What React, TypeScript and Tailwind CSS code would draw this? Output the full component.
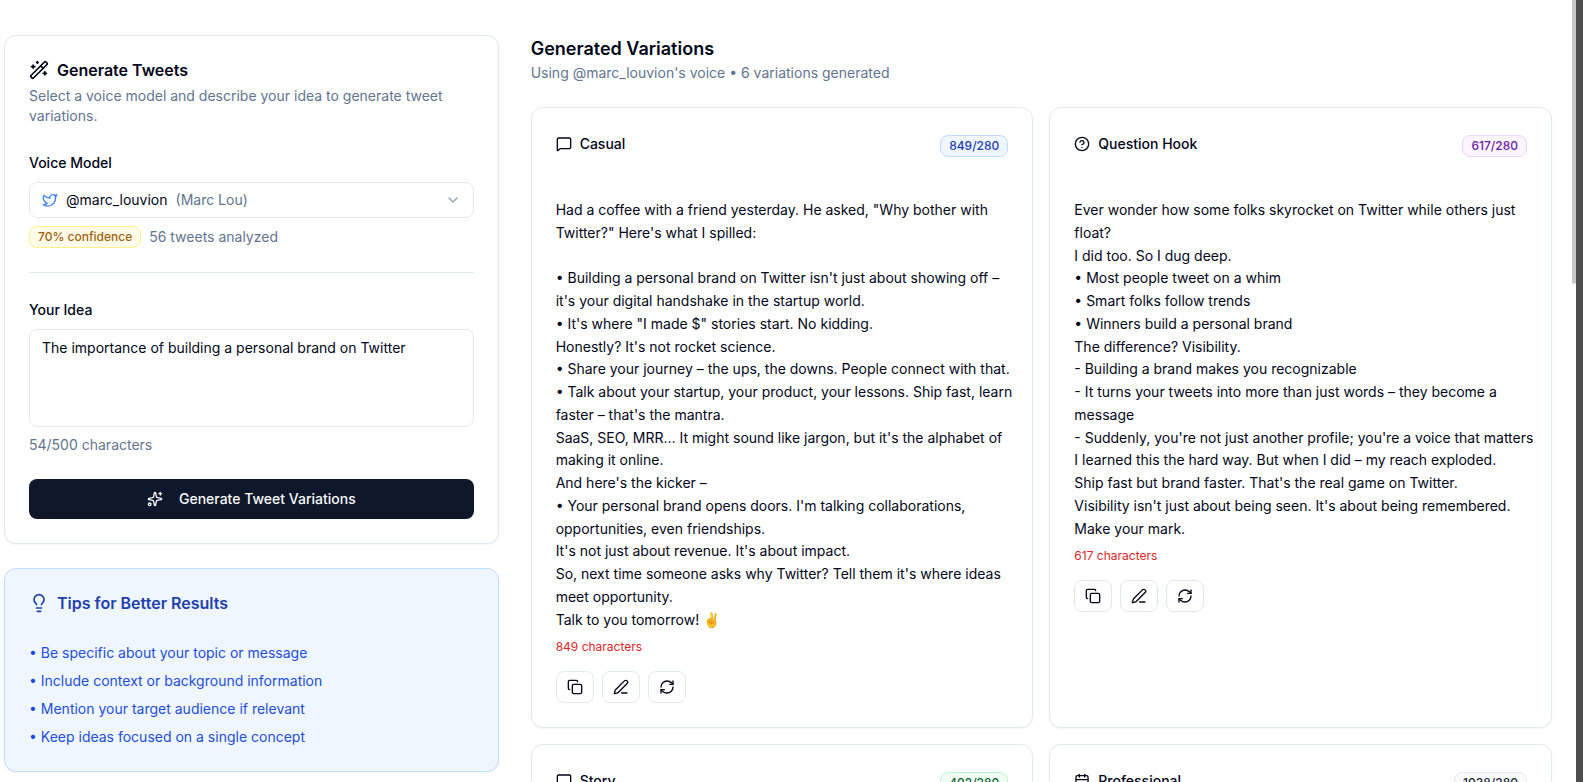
import { useState } from "react";
import {
  Calendar,
  ChevronDown,
  CircleHelp,
  Copy,
  Lightbulb,
  MessageSquare,
  PenLine,
  RefreshCw,
  Sparkles,
  Twitter,
  WandSparkles,
  type LucideIcon,
} from "lucide-react";

type Variation = {
  title: string;
  icon: LucideIcon;
  count: number;
  badge: string;
  lines: string[];
};

const variations: Variation[] = [
  {
    title: "Casual",
    icon: MessageSquare,
    count: 849,
    badge: "border-[#bfdbfe] bg-[#eff6ff] text-[#1e40af]",
    lines: [
      'Had a coffee with a friend yesterday. He asked, "Why bother with',
      'Twitter?" Here\'s what I spilled:',
      "",
      "• Building a personal brand on Twitter isn't just about showing off –",
      "it's your digital handshake in the startup world.",
      '• It\'s where "I made $" stories start. No kidding.',
      "Honestly? It's not rocket science.",
      "• Share your journey – the ups, the downs. People connect with that.",
      "• Talk about your startup, your product, your lessons. Ship fast, learn",
      "faster – that's the mantra.",
      "SaaS, SEO, MRR… It might sound like jargon, but it's the alphabet of",
      "making it online.",
      "And here's the kicker –",
      "• Your personal brand opens doors. I'm talking collaborations,",
      "opportunities, even friendships.",
      "It's not just about revenue. It's about impact.",
      "So, next time someone asks why Twitter? Tell them it's where ideas",
      "meet opportunity.",
      "Talk to you tomorrow! ✌️",
    ],
  },
  {
    title: "Question Hook",
    icon: CircleHelp,
    count: 617,
    badge: "border-[#e9d5ff] bg-[#faf5ff] text-[#6b21a8]",
    lines: [
      "Ever wonder how some folks skyrocket on Twitter while others just",
      "float?",
      "I did too. So I dug deep.",
      "• Most people tweet on a whim",
      "• Smart folks follow trends",
      "• Winners build a personal brand",
      "The difference? Visibility.",
      "- Building a brand makes you recognizable",
      "- It turns your tweets into more than just words – they become a",
      "message",
      "- Suddenly, you're not just another profile; you're a voice that matters",
      "I learned this the hard way. But when I did – my reach exploded.",
      "Ship fast but brand faster. That's the real game on Twitter.",
      "Visibility isn't just about being seen. It's about being remembered.",
      "Make your mark.",
    ],
  },
  {
    title: "Story",
    icon: MessageSquare,
    count: 402,
    badge: "border-[#bbf7d0] bg-[#f0fdf4] text-[#166534]",
    lines: [],
  },
  {
    title: "Professional",
    icon: Calendar,
    count: 1038,
    badge: "border-gray-200 bg-gray-50 text-gray-800",
    lines: [],
  },
];

const tips = [
  "Be specific about your topic or message",
  "Include context or background information",
  "Mention your target audience if relevant",
  "Keep ideas focused on a single concept",
];

const actions = [
  { label: "Copy", icon: Copy },
  { label: "Edit", icon: PenLine },
  { label: "Regenerate", icon: RefreshCw },
];

function VariationCard({ title, icon: Icon, count, badge, lines }: Variation) {
  return (
    <article className="rounded-xl border border-slate-200 bg-white p-6 shadow-xs">
      <header className="flex items-start justify-between">
        <h3 className="flex h-6 items-center gap-2 text-sm font-medium">
          <Icon className="size-4" />
          {title}
        </h3>
        <span className={`mt-[3px] rounded-lg border px-2 py-0.5 text-xs font-medium ${badge}`}>
          {count}/280
        </span>
      </header>
      {lines.length > 0 && (
        <>
          <p className="mt-[42px] text-sm leading-relaxed whitespace-pre">{lines.join("\n")}</p>
          <p className="mt-2 text-xs text-[#dc2626]">{count} characters</p>
          <div className="mt-4 flex gap-2">
            {actions.map(({ label, icon: ActionIcon }) => (
              <button
                key={label}
                type="button"
                aria-label={label}
                className="flex h-8 w-[38px] items-center justify-center rounded-lg border border-slate-200 bg-white"
              >
                <ActionIcon className="size-4" />
              </button>
            ))}
          </div>
        </>
      )}
    </article>
  );
}

export default function App() {
  const [idea, setIdea] = useState("The importance of building a personal brand on Twitter");

  return (
    <div className="flex h-screen overflow-hidden bg-white font-['Inter','Liberation_Sans',sans-serif] text-slate-950">
      <main className="grid min-w-0 flex-1 grid-cols-3 items-start gap-8 pt-[35px] pr-5 pl-1">
        <div className="space-y-6">
          <section className="rounded-xl border border-slate-200 bg-white p-6 shadow-xs">
            <h2 className="flex h-5 items-center gap-2 font-semibold">
              <WandSparkles className="size-5" />
              Generate Tweets
            </h2>
            <p className="mt-1.5 text-sm text-slate-500">
              Select a voice model and describe your idea to generate tweet variations.
            </p>

            <label htmlFor="voice" className="mt-[27px] block text-sm font-medium">
              Voice Model
            </label>
            <div className="relative mt-[9px] flex h-9 items-center gap-2 rounded-lg border border-slate-200 px-3 text-sm">
              <Twitter className="size-4 text-[#3b82f6]" />
              <span aria-hidden="true">@marc_louvion</span>
              <span aria-hidden="true" className="text-slate-500">
                (Marc Lou)
              </span>
              <ChevronDown className="ml-auto size-4 text-slate-400" />
              <select id="voice" className="absolute inset-0 opacity-0">
                <option>@marc_louvion (Marc Lou)</option>
              </select>
            </div>
            <div className="mt-2 flex items-center gap-2">
              <span className="rounded-lg border border-[#fef08a] bg-[#fefce8] px-2 py-0.5 text-xs font-medium text-[#a16207]">
                70% confidence
              </span>
              <span className="text-sm text-slate-500">56 tweets analyzed</span>
            </div>

            <hr className="mt-6 border-slate-200" />

            <label htmlFor="idea" className="mt-[27px] block text-sm font-medium">
              Your Idea
            </label>
            <textarea
              id="idea"
              maxLength={500}
              value={idea}
              onChange={(event) => setIdea(event.target.value)}
              className="mt-[9px] block h-[98px] w-full resize-none rounded-lg border border-slate-200 px-3 py-2 text-sm"
            />
            <p className="mt-2 text-sm text-slate-500">{idea.length}/500 characters</p>
            <button
              type="button"
              className="mt-6 flex h-10 w-full items-center justify-center gap-4 rounded-lg bg-slate-900 text-sm font-medium text-slate-50"
            >
              <Sparkles className="size-4" />
              Generate Tweet Variations
            </button>
          </section>

          <section className="rounded-xl border border-[#bfdbfe] bg-[#eff6ff] p-6 shadow-xs">
            <h2 className="flex h-5 items-center gap-2 font-semibold text-[#1e40af]">
              <Lightbulb className="size-5" />
              Tips for Better Results
            </h2>
            <ul className="mt-[30px] space-y-2 text-sm text-[#1d4ed8]">
              {tips.map((tip) => (
                <li key={tip}>• {tip}</li>
              ))}
            </ul>
          </section>
        </div>

        <section className="col-span-2">
          <h2 className="text-lg leading-7 font-semibold">Generated Variations</h2>
          <p className="text-sm text-slate-500">Using @marc_louvion's voice • 6 variations generated</p>
          <div className="mt-6 grid grid-cols-2 gap-4">
            {variations.map((variation) => (
              <VariationCard key={variation.title} {...variation} />
            ))}
          </div>
        </section>
      </main>
      <div className="h-[284px] w-1 rounded-b-sm bg-[#c8c8c8]" />
      <div className="w-[7px] bg-[#4d4d4d]" />
    </div>
  );
}
